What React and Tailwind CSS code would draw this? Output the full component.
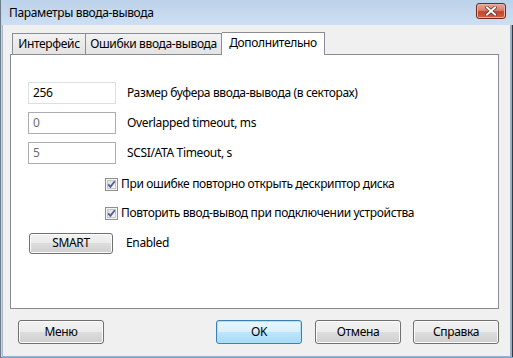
import React from "react";

const font = { fontFamily: '"Noto Sans", "Open Sans", sans-serif' };

function Btn({ children, def = false, w = "w-[86px]", h = "h-[24px]" }) {
  return (
    <div
      className={`${w} ${h} rounded-[3px] border flex items-center justify-center text-[12px] text-black ${
        def
          ? "border-[#3c7fb1] bg-[linear-gradient(to_bottom,#eaf6fd_0%,#d9f0fc_50%,#bee6fd_50%,#a7d9f5_100%)] shadow-[inset_0_0_0_1px_#aee0f8]"
          : "border-[#707070] bg-[linear-gradient(to_bottom,#f2f2f2_0%,#ebebeb_50%,#dddddd_50%,#cfcfcf_100%)] shadow-[inset_0_0_0_1px_#fcfcfc]"
      }`}
    >
      {children}
    </div>
  );
}

function Check() {
  return (
    <svg width="13" height="13" viewBox="0 0 13 13" className="shrink-0">
      <defs>
        <linearGradient id="cbg" x1="0" y1="0" x2="1" y2="1">
          <stop offset="0" stopColor="#dcdcdc" />
          <stop offset="1" stopColor="#f8f8f8" />
        </linearGradient>
      </defs>
      <rect x="0.5" y="0.5" width="12" height="12" fill="#f4f4f4" stroke="#8e8f8f" />
      <rect x="2.5" y="2.5" width="8" height="8" fill="url(#cbg)" stroke="#c5c5c5" />
      <path d="M3.2 6.4 L5.4 8.9 L9.8 3.2" fill="none" stroke="#4a5f97" strokeWidth="1.8" />
    </svg>
  );
}

function Field({ value, focused = false, label }) {
  return (
    <div className="flex items-center h-[22px]">
      <div
        className={`w-[88px] h-[22px] border flex items-center pl-[4px] text-[12px] bg-white ${
          focused ? "border-[#dbe0e6] text-black" : "border-[#abadb3] text-[#6d6d6d]"
        }`}
      >
        {value}
      </div>
      <div className="ml-[11px] text-[12px] text-black">{label}</div>
    </div>
  );
}

export default function App() {
  return (
    <div className="w-[513px] h-[358px] overflow-hidden bg-[#6c7a8a] tracking-[-0.35px]" style={font}>
      <div className="w-[512px] h-[357px] ml-[1px] flex flex-col bg-[#c3d7ec] pl-[1px]">
        {/* title bar */}
        <div className="h-[25px] flex items-center bg-[linear-gradient(to_bottom,#bcd2ea,#cddff2)] pl-[7px] pr-[7px] shrink-0">
          <div className="text-[12px] text-black flex-1">Параметры ввода-вывода</div>
          <div className="w-[30px] h-[16px] mb-[3px] rounded-[3px] border border-[#6d2a1d] bg-[linear-gradient(to_bottom,#e8a999_0%,#d8806b_45%,#c4442d_55%,#d1604a_100%)] flex items-center justify-center shadow-[inset_0_0_0_1px_#eab2a4]">
            <svg width="12" height="10" viewBox="0 0 12 10">
              <path d="M2 1.5 L10 8.5 M10 1.5 L2 8.5" stroke="#5a2a22" strokeWidth="3.4" strokeLinecap="square" />
              <path d="M2 1.5 L10 8.5 M10 1.5 L2 8.5" stroke="#ffffff" strokeWidth="2" strokeLinecap="square" />
            </svg>
          </div>
        </div>
        {/* client */}
        <div className="flex-1 flex border-l border-[#a9b6c4]">
          <div className="flex-1 flex flex-col bg-[#f0f0f0] border-r border-b border-[#9fb1c4]">
            <div className="flex-1 flex flex-col pl-[7px] pr-[9px] pt-[6px]">
              {/* tabs */}
              <div className="flex items-end h-[23px] pl-[2px] relative z-10">
                <div className="h-[21px] w-[74px] flex items-center justify-center border border-[#898c95] border-b-0 bg-[linear-gradient(to_bottom,#f2f2f2,#e3e3e3)] text-[12px]">
                  Интерфейс
                </div>
                <div className="h-[21px] w-[136px] flex items-center justify-center border border-[#898c95] border-b-0 border-l-0 bg-[linear-gradient(to_bottom,#f2f2f2,#e3e3e3)] text-[12px]">
                  Ошибки ввода-вывода
                </div>
                <div className="h-[23px] w-[103px] -mb-[1px] flex items-start justify-center pt-[1px] border border-[#898c95] border-b-0 border-l-0 bg-white text-[12px]">
                  Дополнительно
                </div>
              </div>
              {/* panel */}
              <div className="w-[489px] h-[255px] border border-[#898c95] bg-white flex flex-col pl-[17px] pt-[27px]">
                <div className="flex flex-col gap-[8px]">
                  <Field value="256" focused label="Размер буфера ввода-вывода (в секторах)" />
                  <Field value="0" label="Overlapped timeout, ms" />
                  <Field value="5" label="SCSI/ATA Timeout, s" />
                </div>
                <div className="flex items-center h-[20px] mt-[10px] pl-[77px] gap-[3px] text-[12px]">
                  <Check />
                  <span>При ошибке повторно открыть дескриптор диска</span>
                </div>
                <div className="flex items-center h-[20px] mt-[9px] pl-[77px] gap-[3px] text-[12px]">
                  <Check />
                  <span>Повторить ввод-вывод при подключении устройства</span>
                </div>
                <div className="flex items-center h-[20px] mt-[10px] pl-[1px]">
                  <Btn w="w-[84px]" h="h-[21px]">SMART</Btn>
                  <span className="ml-[13px] text-[12px]">Enabled</span>
                </div>
              </div>
            </div>
            {/* bottom buttons */}
            <div className="h-[47px] flex items-start pt-[11px] pl-[15px] pr-[11px] shrink-0">
              <Btn>Меню</Btn>
              <div className="flex-1" />
              <Btn def>OK</Btn>
              <div className="w-[13px]" />
              <Btn>Отмена</Btn>
              <div className="w-[12px]" />
              <Btn>Справка</Btn>
            </div>
          </div>
          <div className="w-[1px] bg-[#55c8ee]" />
          <div className="w-[1px] bg-[#2c3a46]" />
        </div>
        <div className="h-[2px] bg-[#4fb7e8] shrink-0" />
      </div>
    </div>
  );
}
